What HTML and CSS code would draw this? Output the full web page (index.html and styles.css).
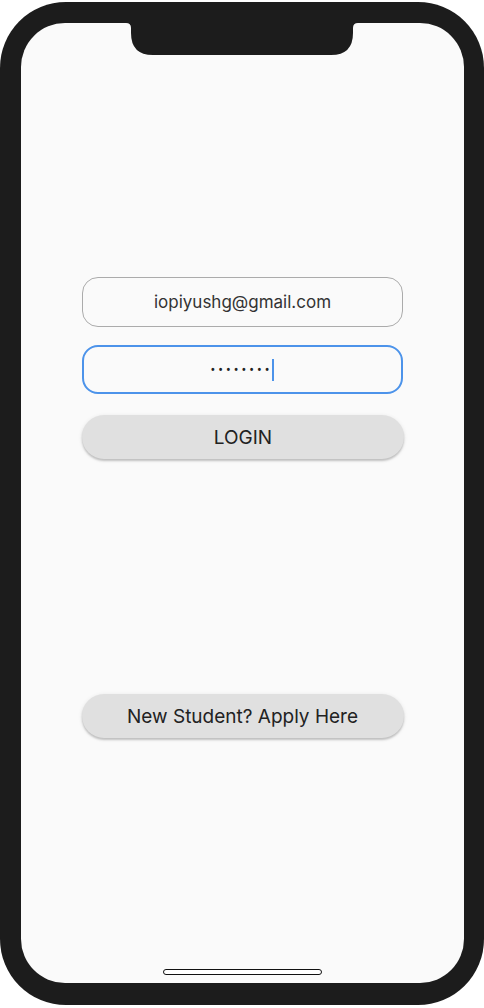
FILE: index.html
```html
<!DOCTYPE html>
<html>
<head>
<meta charset="utf-8">
<link rel="stylesheet" href="styles.css">
</head>
<body>
<div class="phone">
  <div class="screen">
    <svg class="notch" width="443" height="40" viewBox="0 0 443 40">
      <path d="M105,0 H337 Q332,0 332,5 V10 Q332,32 310,32 H132 Q110,32 110,10 V5 Q110,0 105,0 Z" fill="#1c1c1c"/>
    </svg>
    <div class="form">
      <div class="field email">iopiyushg@gmail.com</div>
      <div class="field password"><span class="dots">••••••••</span><span class="cursor"></span></div>
      <button class="btn">LOGIN</button>
    </div>
    <div class="apply">
      <button class="btn">New Student? Apply Here</button>
    </div>
    <div class="home"></div>
  </div>
</div>
</body>
</html>
```
FILE: styles.css
```css
* { box-sizing: border-box; }
html, body { margin: 0; padding: 0; background: #ffffff; }
body { font-family: Inter, Roboto, "Liberation Sans", sans-serif; width: 484px; height: 1008px; overflow: hidden; }
.phone {
  margin-top: 2px;
  width: 484px;
  height: 1003px;
  background: #1c1c1c;
  border-radius: 66px;
  padding: 21px 20px 22px 21px;
}
.screen {
  position: relative;
  width: 443px;
  height: 960px;
  background: #fafafa;
  border-radius: 44px;
  overflow: hidden;
  padding-top: 254px;
  display: flex;
  flex-direction: column;
  align-items: center;
}
.notch { position: absolute; left: 0; top: 0; }
.form { width: 321px; display: flex; flex-direction: column; }
.field {
  height: 50px;
  border-radius: 16px;
  display: flex;
  align-items: center;
  justify-content: center;
  font-size: 17px;
  color: #333;
  background: #fafafa;
}
.email { border: 1px solid #ababab; }
.password { border: 2px solid #4c93ea; margin-top: 18px; height: 49px; }
.dots { font-family: Roboto, sans-serif; font-size: 14px; letter-spacing: 3px; color: #222; }
.cursor { display: inline-block; width: 2px; height: 22px; background: #4c93ea; }
.btn {
  width: 322px;
  height: 44px;
  border: none;
  border-radius: 22px;
  background: #e0e0e0;
  box-shadow: 0 2px 2px rgba(0,0,0,0.18), 0 1px 4px rgba(0,0,0,0.10);
  font-family: Inter, Roboto, "Liberation Sans", sans-serif;
  font-size: 19px;
  color: #222;
  padding: 0;
}
.form .btn { margin-top: 21px; }
.apply { margin-top: 235px; }
.home {
  position: absolute;
  left: 142px;
  bottom: 8px;
  width: 159px;
  height: 6px;
  border: 1.5px solid #111;
  border-radius: 3px;
  background: #fff;
}
```
